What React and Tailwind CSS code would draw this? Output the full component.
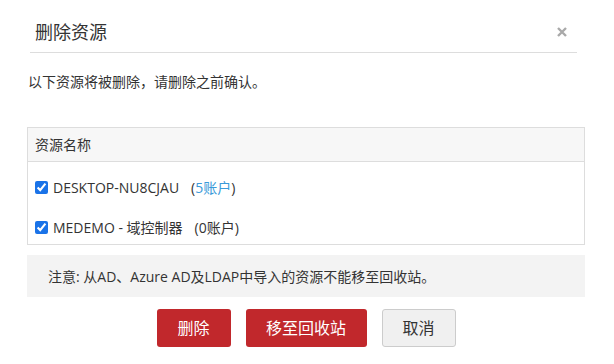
import React from "react";

const resources = [
  { id: 1, name: "DESKTOP-NU8CJAU", accounts: 5 },
  { id: 2, name: "MEDEMO - 域控制器", accounts: 0 },
];

function App() {
  return (
    <div className="w-[614px] h-[364px] bg-white text-[#333] font-['Open_Sans','Noto_Sans_CJK_SC',sans-serif]">
      <div className="ml-[30px] mr-[37px] pt-[19px] flex items-center border-b border-[#ddd] pb-[7px] pl-[5px] pr-[10px]">
        <h2 className="text-[18px] leading-[26px] text-[#333]">删除资源</h2>
        <button className="ml-auto">
          <svg width="10" height="10" viewBox="0 0 10 10" className="block">
            <path d="M1 1L9 9M9 1L1 9" stroke="#a9a9a9" strokeWidth="2.4" />
          </svg>
        </button>
      </div>

      <p className="mt-[19px] pl-[28px] text-[14px] leading-[20px]">
        以下资源将被删除，请删除之前确认。
      </p>

      <div className="ml-[27px] w-[558px]">
        <div className="mt-[35px] border border-[#ddd]">
          <div className="flex h-[34px] items-center bg-[#f7f7f7] border-b border-[#ddd] pl-[7px] text-[14px]">
            资源名称
          </div>
          <ul className="flex flex-col gap-[10px] pt-[10px] pb-[2px]">
            {resources.map((r) => (
              <li key={r.id} className="flex h-[30px] items-center pl-[7px] text-[14px]">
                <input
                  type="checkbox"
                  defaultChecked
                  className="m-0 h-[13px] w-[13px] accent-[#1a73e8]"
                />
                <span className="ml-[5px]">{r.name}</span>
                <span className="ml-[12px]">
                  (
                  <span className={r.accounts > 0 ? "text-[#3a9ad9]" : ""}>
                    {r.accounts}账户
                  </span>
                  )
                </span>
              </li>
            ))}
          </ul>
        </div>

        <div className="mt-[10px] flex h-[42px] items-center bg-[#f3f3f3] pl-[21px] text-[14px]">
          注意: 从AD、Azure AD及LDAP中导入的资源不能移至回收站。
        </div>

        <div className="mt-[12px] flex justify-center gap-[15px]">
          <button className="h-[38px] w-[74px] rounded-[3px] bg-[#c1282c] text-[16px] text-white">
            删除
          </button>
          <button className="h-[38px] w-[121px] rounded-[3px] bg-[#c1282c] text-[16px] text-white">
            移至回收站
          </button>
          <button className="h-[38px] w-[74px] rounded-[3px] border border-[#ccc] bg-[#f0f0f0] text-[16px] text-[#333]">
            取消
          </button>
        </div>
      </div>
    </div>
  );
}

export default App;
